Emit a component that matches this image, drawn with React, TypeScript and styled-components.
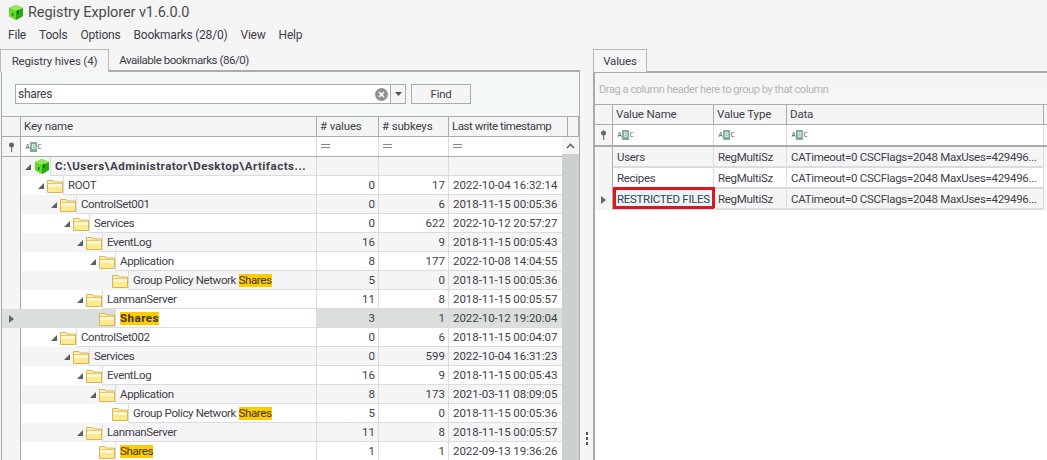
import React from "react";
import styled, { createGlobalStyle } from "styled-components";

const Global = createGlobalStyle`
  html, body { margin: 0; padding: 0; background: #f5f5f5; }
  * { box-sizing: border-box; }
`;

const LINE = "#a9aca9";
const SOFT = "#dcdcdc";
const TEXT = "#3d4049";

const Page = styled.div`
  width: 1047px;
  height: 460px;
  overflow: hidden;
  display: flex;
  flex-direction: column;
  background: #f5f5f5;
  color: ${TEXT};
  font-family: Roboto, "Noto Sans", sans-serif;
  font-size: 11.5px;
  letter-spacing: -0.3px;
`;

const TitleBar = styled.div`
  height: 24px;
  display: flex;
  align-items: center;
  padding-left: 8px;
  gap: 4px;
  font-size: 14.5px;
  letter-spacing: -0.08px;
  color: #4a4a4a;
`;

const MenuBar = styled.div`
  height: 25px;
  display: flex;
  align-items: center;
  padding: 0 0 3px 8px;
  gap: 13px;
  font-size: 12px;
  letter-spacing: -0.2px;
`;

const Workspace = styled.div`
  flex: 1;
  display: flex;
  min-height: 0;
`;

const LeftColumn = styled.div`
  width: 580px;
  display: flex;
  flex-direction: column;
`;

const Splitter = styled.div`
  width: 13px;
  display: flex;
  flex-direction: column;
  justify-content: flex-end;
  align-items: center;
  gap: 2px;
  padding: 0 0 15px 1px;
`;

const SplitDot = styled.i`
  width: 2px;
  height: 3px;
  background: #555;
`;

const RightColumn = styled.div`
  flex: 1;
  display: flex;
  flex-direction: column;
  min-width: 0;
`;

const TabStrip = styled.div`
  height: 22px;
  display: flex;
  flex: none;
`;

const Tab = styled.div<{ $active?: boolean; $w: number }>`
  width: ${(p) => p.$w}px;
  height: ${(p) => (p.$active ? "23px" : "21px")};
  display: flex;
  align-items: center;
  justify-content: center;
  font-size: 11.5px;
  letter-spacing: ${(p) => (p.$active ? "-0.15px" : "-0.45px")};
  white-space: nowrap;
  position: relative;
  z-index: 1;
  background: #f5f5f5;
  border: ${(p) => (p.$active ? `1px solid #b9b9b9` : "1px solid transparent")};
  border-bottom: none;
`;

const Panel = styled.div`
  flex: 1;
  min-height: 0;
  display: flex;
  flex-direction: column;
  border-top: 2px solid ${LINE};
  border-left: 2px solid ${LINE};
`;

const LeftPanel = styled(Panel)`
  border-right: 1px solid ${LINE};
  margin-top: -1px;
  margin-left: 1px;
  border-left-width: 1px;
`;

const SearchBar = styled.div`
  height: 44px;
  flex: none;
  display: flex;
  align-items: center;
  padding: 0 0 0 13px;
  gap: 5px;
  background: #f4f8f4;
`;

const SearchBox = styled.div`
  width: 391px;
  height: 20px;
  display: flex;
  align-items: center;
  background: #fff;
  border: 1px solid ${LINE};
  padding-left: 2px;
  font-size: 12px;
`;

const SearchText = styled.span`
  flex: 1;
`;

const ClearIcon = styled.svg`
  width: 13px;
  height: 13px;
  margin-right: 2px;
`;

const DropButton = styled.div`
  width: 15px;
  height: 18px;
  flex: none;
  display: flex;
  align-items: center;
  justify-content: center;
  border-left: 1px solid ${LINE};
  background: #f5f5f5;
`;

const FindButton = styled.div`
  width: 60px;
  height: 20px;
  display: flex;
  align-items: center;
  justify-content: center;
  background: #f5f5f5;
  border: 1px solid ${LINE};
  font-size: 11.5px;
`;

const HeaderRow = styled.div<{ $cols: string }>`
  display: grid;
  grid-template-columns: ${(p) => p.$cols};
  height: 21px;
  flex: none;
  border-top: 1px solid ${LINE};
  border-bottom: 1px solid ${LINE};
  background: #f5f5f5;
`;

const HeaderCell = styled.div<{ $tight?: boolean }>`
  display: flex;
  align-items: center;
  padding: 0 0 1px 3px;
  border-right: 1px solid ${LINE};
  white-space: nowrap;
  overflow: hidden;
  letter-spacing: ${(p) => (p.$tight ? "-0.45px" : "-0.15px")};
`;

const FilterRow = styled.div<{ $cols: string; $h: number; $thick?: boolean }>`
  display: grid;
  grid-template-columns: ${(p) => p.$cols};
  height: ${(p) => p.$h}px;
  background: #fff;
  border-bottom: ${(p) => (p.$thick ? 2 : 1)}px solid ${LINE};
`;

const PinCell = styled.div`
  display: flex;
  align-items: center;
  justify-content: center;
  background: #f5f5f5;
  border-right: 1px solid ${LINE};
`;

const FilterCell = styled.div`
  display: flex;
  align-items: center;
  padding-left: 4px;
  border-right: 1px solid ${SOFT};
`;

const AbcWrap = styled.span`
  display: inline-flex;
  align-items: center;
  height: 10px;
  font-family: "DejaVu Sans Mono", monospace;
  font-size: 7px;
  line-height: 10px;
  letter-spacing: 0;
`;

const AbcLetter = styled.span<{ $on?: boolean }>`
  width: ${(p) => (p.$on ? "7px" : "5px")};
  height: 10px;
  text-align: center;
  background: ${(p) => (p.$on ? "#7fae9c" : "transparent")};
  color: ${(p) => (p.$on ? "#fff" : "#555")};
`;

const BodyWrap = styled.div`
  flex: 1;
  min-height: 0;
  display: flex;
  overflow: hidden;
  background: #fff;
`;

const Rows = styled.div`
  flex: 1;
  min-width: 0;
`;

const ScrollArrow = styled.div`
  height: 17px;
  display: flex;
  align-items: center;
  justify-content: center;
  background: #f5f5f5;
`;

const ScrollColumn = styled.div`
  width: 17px;
  flex: none;
  background: #cdd1cd;
`;

const TreeRow = styled.div<{ $grey?: boolean; $sel?: boolean }>`
  display: grid;
  grid-template-columns: 19px 296px 62px 70px 114px;
  height: 19px;
  background: ${(p) => (p.$sel ? "#dbdfdb" : p.$grey ? "#f5f5f5" : "#fff")};
`;

const Indicator = styled.div<{ $sel?: boolean }>`
  display: flex;
  align-items: center;
  justify-content: center;
  background: ${(p) => (p.$sel ? "#dbdfdb" : "#f5f5f5")};
  border-right: 1px solid ${(p) => (p.$sel ? "#dbdfdb" : LINE)};
`;

const KeyCell = styled.div`
  display: flex;
  min-width: 0;
  border-right: 1px solid ${SOFT};
`;

const Indent = styled.div<{ $level: number }>`
  width: ${(p) => 29 + p.$level * 13}px;
  flex: none;
  display: flex;
  align-items: center;
  justify-content: flex-end;
  gap: 3px;
`;

const KeyText = styled.div<{ $sel?: boolean; $bold?: boolean }>`
  flex: 1;
  min-width: 0;
  display: flex;
  align-items: center;
  padding-left: 4px;
  white-space: pre;
  font-weight: ${(p) => (p.$bold ? 700 : 400)};
  letter-spacing: ${(p) => (p.$bold ? "0.52px" : "-0.37px")};
  background: ${(p) => (p.$sel ? "#fff" : "transparent")};
  border-left: 1px solid ${SOFT};
  border-bottom: 1px solid ${SOFT};
`;

const Hit = styled.span`
  display: inline-block;
  line-height: 13px;
  background: #ffcc00;
  color: #3a3320;
`;

const NumCell = styled.div`
  display: flex;
  align-items: center;
  justify-content: flex-end;
  padding-right: 3px;
  letter-spacing: 0;
  border-right: 1px solid ${SOFT};
  border-bottom: 1px solid ${SOFT};
`;

const TimeCell = styled.div`
  display: flex;
  align-items: center;
  padding-left: 4px;
  letter-spacing: -0.05px;
  border-bottom: 1px solid ${SOFT};
  white-space: nowrap;
`;

const GroupPanel = styled.div`
  height: 31px;
  flex: none;
  display: flex;
  align-items: center;
  padding-left: 4px;
  padding-top: 1px;
  color: #b4b6b4;
  font-size: 11px;
  letter-spacing: -0.42px;
  background: linear-gradient(#f5f5f5 50%, #f4f8f4);
`;

const ValueRow = styled.div<{ $grey?: boolean }>`
  display: grid;
  grid-template-columns: 18px 101px 73px 257px;
  height: 21px;
  background: ${(p) => (p.$grey ? "#f5f5f5" : "#fff")};
`;

const ValueCell = styled.div<{ $hot?: boolean }>`
  position: relative;
  display: flex;
  align-items: center;
  padding-left: 4px;
  white-space: nowrap;
  border-right: 1px solid ${SOFT};
  border-bottom: 2px solid ${SOFT};
  background: ${(p) => (p.$hot ? "#e8f6fb" : "transparent")};
`;

const RedBox = styled.span`
  position: absolute;
  left: 0;
  right: -2px;
  top: -2px;
  bottom: -1px;
  border: 3px solid #e0141f;
  pointer-events: none;
`;

const Cube = () => (
  <svg width="16" height="17" viewBox="0 0 16 17">
    <polygon points="8,1 15,4 15,12 8,16 1,12 1,4" fill="#3fc21c" />
    <polygon points="1,4 8,7 8,16 1,12" fill="#5fdc22" />
    <polygon points="15,4 8,7 8,16 15,12" fill="#27a814" />
    <polygon points="8,1 15,4 8,7 1,4" fill="#8fe85a" />
    <rect x="9" y="6" width="1.5" height="4" fill="#0f6b0c" />
    <rect x="4" y="9" width="1.5" height="3" fill="#1c8a12" />
  </svg>
);

const Folder = () => (
  <svg width="16" height="14" viewBox="0 0 16 14">
    <path d="M0.5 13.5V1.5H6L7 3H15.5V13.5Z" fill="#fff2b0" stroke="#d8b458" />
    <rect x="1" y="4" width="14" height="1" fill="#e9c766" />
    <rect x="1" y="5" width="14" height="3" fill="#fff8cf" />
    <rect x="1" y="8" width="14" height="5" fill="#fde98e" />
  </svg>
);

const Expander = () => (
  <svg width="6" height="6" viewBox="0 0 6 6">
    <polygon points="6,0 6,6 0,6" fill="#5e5e5e" />
  </svg>
);

const RowArrow = () => (
  <svg width="5" height="8" viewBox="0 0 5 8">
    <polygon points="0,0 5,4 0,8" fill="#666" />
  </svg>
);

const Pin = () => (
  <svg width="7" height="10" viewBox="0 0 7 10">
    <circle cx="3.5" cy="3" r="2.5" fill="#666" />
    <rect x="3" y="5" width="1.2" height="5" fill="#777" />
  </svg>
);

const Abc = () => (
  <AbcWrap>
    <AbcLetter>A</AbcLetter>
    <AbcLetter $on>B</AbcLetter>
    <AbcLetter>C</AbcLetter>
  </AbcWrap>
);

const Equals = () => (
  <svg width="10" height="5" viewBox="0 0 10 5">
    <rect y="0" width="9" height="1" fill="#888" />
    <rect y="3" width="9" height="1" fill="#888" />
  </svg>
);

type Tree = {
  level: number;
  name: string;
  hit?: string;
  v?: number;
  s?: number;
  t?: string;
  leaf?: boolean;
  root?: boolean;
  sel?: boolean;
};

const tree: Tree[] = [
  { level: 0, name: "C:\\Users\\Administrator\\Desktop\\Artifacts...", root: true },
  { level: 1, name: "ROOT", v: 0, s: 17, t: "2022-10-04 16:32:14" },
  { level: 2, name: "ControlSet001", v: 0, s: 6, t: "2018-11-15 00:05:36" },
  { level: 3, name: "Services", v: 0, s: 622, t: "2022-10-12 20:57:27" },
  { level: 4, name: "EventLog", v: 16, s: 9, t: "2018-11-15 00:05:43" },
  { level: 5, name: "Application", v: 8, s: 177, t: "2022-10-08 14:04:55" },
  { level: 6, name: "Group Policy Network ", hit: "Shares", v: 5, s: 0, t: "2018-11-15 00:05:36", leaf: true },
  { level: 4, name: "LanmanServer", v: 11, s: 8, t: "2018-11-15 00:05:57" },
  { level: 5, name: "", hit: "Shares", v: 3, s: 1, t: "2022-10-12 19:20:04", leaf: true, sel: true },
  { level: 2, name: "ControlSet002", v: 0, s: 6, t: "2018-11-15 00:04:07" },
  { level: 3, name: "Services", v: 0, s: 599, t: "2022-10-04 16:31:23" },
  { level: 4, name: "EventLog", v: 16, s: 9, t: "2018-11-15 00:05:43" },
  { level: 5, name: "Application", v: 8, s: 173, t: "2021-03-11 08:09:05" },
  { level: 6, name: "Group Policy Network ", hit: "Shares", v: 5, s: 0, t: "2018-11-15 00:05:36", leaf: true },
  { level: 4, name: "LanmanServer", v: 11, s: 8, t: "2018-11-15 00:05:57" },
  { level: 5, name: "", hit: "Shares", v: 1, s: 1, t: "2022-09-13 19:36:26", leaf: true },
];

const values = ["Users", "Recipes", "RESTRICTED FILES"];
const DATA = "CATimeout=0 CSCFlags=2048 MaxUses=429496...";
const LEFT_HEAD = "19px 296px 62px 70px 119px 1fr";
const LEFT_FILTER = "19px 296px 62px 70px 114px";
const RIGHT_COLS = "18px 101px 73px 257px";

export default function App() {
  return (
    <Page>
      <Global />
      <TitleBar>
        <Cube />
        <span>Registry Explorer v1.6.0.0</span>
      </TitleBar>
      <MenuBar>
        <span>File</span>
        <span>Tools</span>
        <span>Options</span>
        <span>Bookmarks (28/0)</span>
        <span>View</span>
        <span>Help</span>
      </MenuBar>
      <Workspace>
        <LeftColumn>
          <TabStrip>
            <Tab $active $w={109}>Registry hives (4)</Tab>
            <Tab $w={150}>Available bookmarks (86/0)</Tab>
          </TabStrip>
          <LeftPanel>
            <SearchBar>
              <SearchBox>
                <SearchText>shares</SearchText>
                <ClearIcon viewBox="0 0 13 13">
                  <circle cx="6.5" cy="6.5" r="6.5" fill="#8f918f" />
                  <path d="M4 4L9 9M9 4L4 9" stroke="#fff" strokeWidth="1.6" />
                </ClearIcon>
                <DropButton>
                  <svg width="7" height="4" viewBox="0 0 7 4">
                    <polygon points="0,0 7,0 3.5,4" fill="#555" />
                  </svg>
                </DropButton>
              </SearchBox>
              <FindButton>Find</FindButton>
            </SearchBar>
            <HeaderRow $cols={LEFT_HEAD}>
              <HeaderCell />
              <HeaderCell>Key name</HeaderCell>
              <HeaderCell># values</HeaderCell>
              <HeaderCell># subkeys</HeaderCell>
              <HeaderCell $tight>Last write timestamp</HeaderCell>
              <HeaderCell />
            </HeaderRow>
            <BodyWrap>
              <Rows>
                <FilterRow $cols={LEFT_FILTER} $h={20}>
                  <PinCell><Pin /></PinCell>
                  <FilterCell><Abc /></FilterCell>
                  <FilterCell><Equals /></FilterCell>
                  <FilterCell><Equals /></FilterCell>
                  <FilterCell><Equals /></FilterCell>
                </FilterRow>
                {tree.map((r, i) => (
                  <TreeRow key={i} $grey={i % 2 === 0} $sel={r.sel}>
                    <Indicator $sel={r.sel}>{r.sel && <RowArrow />}</Indicator>
                    <KeyCell>
                      <Indent $level={r.level}>
                        {!r.leaf && <Expander />}
                        {r.root ? <Cube /> : <Folder />}
                      </Indent>
                      <KeyText $sel={r.sel} $bold={r.root || r.sel}>
                        {r.name}
                        {r.hit && <Hit>{r.hit}</Hit>}
                      </KeyText>
                    </KeyCell>
                    <NumCell>{r.v}</NumCell>
                    <NumCell>{r.s}</NumCell>
                    <TimeCell>{r.t}</TimeCell>
                  </TreeRow>
                ))}
              </Rows>
              <ScrollColumn>
                <ScrollArrow>
                  <svg width="9" height="6" viewBox="0 0 9 6">
                    <path d="M1 5L4.5 1.5L8 5" fill="none" stroke="#666" strokeWidth="1.6" />
                  </svg>
                </ScrollArrow>
              </ScrollColumn>
            </BodyWrap>
          </LeftPanel>
        </LeftColumn>
        <Splitter>
          <SplitDot />
          <SplitDot />
          <SplitDot />
        </Splitter>
        <RightColumn>
          <TabStrip>
            <Tab $active $w={54}>Values</Tab>
          </TabStrip>
          <Panel>
            <GroupPanel>Drag a column header here to group by that column</GroupPanel>
            <HeaderRow $cols={RIGHT_COLS}>
              <HeaderCell />
              <HeaderCell>Value Name</HeaderCell>
              <HeaderCell>Value Type</HeaderCell>
              <HeaderCell>Data</HeaderCell>
            </HeaderRow>
            <BodyWrap>
              <Rows>
                <FilterRow $cols={RIGHT_COLS} $h={22} $thick>
                  <PinCell><Pin /></PinCell>
                  <FilterCell><Abc /></FilterCell>
                  <FilterCell><Abc /></FilterCell>
                  <FilterCell><Abc /></FilterCell>
                </FilterRow>
                {values.map((name, i) => (
                  <ValueRow key={name} $grey={i % 2 === 0}>
                    <Indicator>{i === 2 && <RowArrow />}</Indicator>
                    <ValueCell $hot={i === 2}>
                      {name}
                      {i === 2 && <RedBox />}
                    </ValueCell>
                    <ValueCell>RegMultiSz</ValueCell>
                    <ValueCell>{DATA}</ValueCell>
                  </ValueRow>
                ))}
              </Rows>
            </BodyWrap>
          </Panel>
        </RightColumn>
      </Workspace>
    </Page>
  );
}
